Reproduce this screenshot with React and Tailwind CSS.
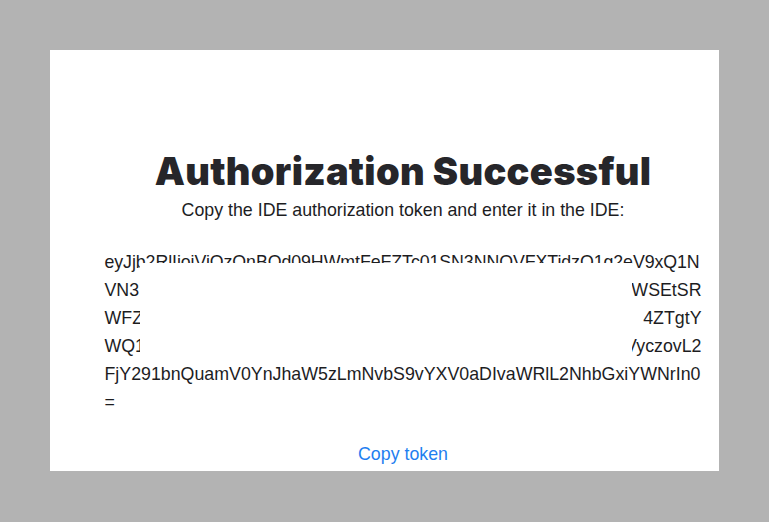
import React from 'react';

const tokenLines = [
  { full: 'eyJjb2RlIjoiViOzOnBOd09HWmtFeFZTc01SN3NNQVFXTidzQ1g2eV9xQ1N' },
  { left: 'VN3', right: 'WSEtSR' },
  { left: 'WFZ', right: '4ZTgtY' },
  { left: 'WQ1', right: '3VyczovL2' },
  { full: 'FjY291bnQuamV0YnJhaW5zLmNvbS9vYXV0aDIvaWRlL2NhbGxiYWNrIn0' },
  { full: '=' },
];

export default function App() {
  return (
    <div className="min-h-screen bg-[#b3b3b3] p-[50px]" style={{ fontFamily: '"Liberation Sans", Arial, sans-serif' }}>
      <div className="h-[421px] w-[669px] overflow-hidden bg-white">
        <div className="flex flex-col items-center pl-[37px] pt-[102px]">
          <h1 className="font-['Inter',sans-serif] text-[38px] font-black leading-[38px] tracking-[0.3px] text-[#26262a]">
            Authorization Successful
          </h1>
          <p className="mt-[8px] text-[17.8px] leading-[24px] text-[#1d1d1f]">
            Copy the IDE authorization token and enter it in the IDE:
          </p>

          {/* token, partly hidden behind a blank patch */}
          <div className="relative mt-[26px] w-[597px] text-[17.8px] leading-[28px] text-[#1d1d1f]">
            {tokenLines.map((line, i) =>
              line.full ? (
                <div key={i} className={i === 0 ? 'h-[28px] whitespace-nowrap tracking-[-0.08px]' : 'h-[28px] whitespace-nowrap'}>
                  {line.full}
                </div>
              ) : (
                <div key={i} className="flex h-[28px] justify-between whitespace-nowrap">
                  <span>{line.left}</span>
                  <span>{line.right}</span>
                </div>
              )
            )}
            <div className="absolute left-[35px] top-[15px] h-[98px] w-[492px] bg-white" />
          </div>

          <button className="mt-[26px] text-[17.8px] leading-[24px] text-[#1f7ff0]">Copy token</button>
        </div>
      </div>
    </div>
  );
}
